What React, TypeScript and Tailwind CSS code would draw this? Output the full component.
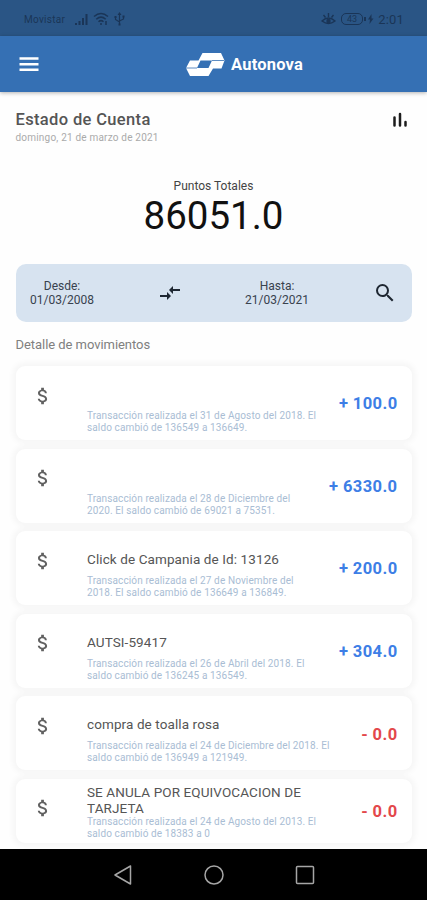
/**
 * Estado de Cuenta - account statement screen
 * Shows total points, date range filter and the list of movements
 */

import clsx from 'clsx';
import { MdAttachMoney, MdCompareArrows, MdSearch } from 'react-icons/md';

const movements = [
  {
    title: '',
    lines: ['Transacción realizada el 31 de Agosto del 2018. El', 'saldo cambió de 136549 a 136649.'],
    amount: '+ 100.0',
  },
  {
    title: '',
    lines: ['Transacción realizada el 28 de Diciembre del', '2020. El saldo cambió de 69021 a 75351.'],
    amount: '+ 6330.0',
  },
  {
    title: 'Click de Campania de Id: 13126',
    lines: ['Transacción realizada el 27 de Noviembre del', '2018. El saldo cambió de 136649 a 136849.'],
    amount: '+ 200.0',
  },
  {
    title: 'AUTSI-59417',
    lines: ['Transacción realizada el 26 de Abril del 2018. El', 'saldo cambió de 136245 a 136549.'],
    amount: '+ 304.0',
  },
  {
    title: 'compra de toalla rosa',
    lines: ['Transacción realizada el 24 de Diciembre del 2018. El', 'saldo cambió de 136949 a 121949.'],
    amount: '- 0.0',
  },
  {
    title: 'SE ANULA POR EQUIVOCACION DE TARJETA',
    lines: ['Transacción realizada el 24 de Agosto del 2013. El', 'saldo cambió de 18383 a 0'],
    amount: '- 0.0',
    compact: true,
  },
];

function StatusBar() {
  return (
    <div className="flex h-9 shrink-0 items-center bg-[#2a5585] pl-6 pr-[23px] pt-0.5 text-[#1a3557]">
      <span className="w-[51px] text-[10px] tracking-[0.3px]">Movistar</span>
      {/* Signal */}
      <svg className="h-[12px] w-[13px]" viewBox="0 0 13 12" fill="currentColor">
        <path d="M0 10h2v2H0zM3.5 8h2v4h-2zM7 5h2v7H7zM10.5 1h2v11h-2z" />
      </svg>
      {/* Wifi */}
      <svg className="ml-[5px] h-[14px] w-4" viewBox="0 0 16 14" fill="none" stroke="currentColor" strokeWidth="1.5">
        <path d="M1 4.5Q8-1.5 15 4.5M3.3 7.3Q8 3 12.7 7.3M5.5 9.8Q8 7.5 10.5 9.8" />
        <circle cx="8" cy="12" r="1" fill="currentColor" stroke="none" />
        <path d="M13 9v4" />
      </svg>
      {/* USB */}
      <svg className="ml-[5px] h-[14px] w-[11px]" viewBox="0 0 11 14" fill="none" stroke="currentColor" strokeWidth="1.2">
        <path d="M5.5 2v10M1.5 5v2.5l4 2.5M9.5 4.5V7L5.5 9" />
        <path d="M5.5 0l2 3h-4zM.5 4h2v2h-2zM8.5 3.5h2v2h-2zM4.5 11.5h2v2h-2z" fill="currentColor" stroke="none" />
      </svg>
      {/* Eye comfort */}
      <svg className="ml-auto h-[13px] w-[15px]" viewBox="0 0 15 13" fill="none" stroke="currentColor" strokeWidth="1.4">
        <path d="M1 8Q7.5 2 14 8Q7.5 13 1 8ZM7.5 0v4M2.5 2l2 2.5M12.5 2l-2 2.5" />
        <circle cx="7.5" cy="8" r="2.2" fill="currentColor" stroke="none" />
      </svg>
      <span className="ml-[5px] flex h-3 w-[22px] items-center justify-center rounded-[5px] border border-current text-[9px] leading-none">
        43
      </span>
      <svg className="ml-px h-[10px] w-[10px]" viewBox="0 0 10 10" fill="currentColor">
        <path d="M0 3h2v4H0zM7.5 0L4 5.5h2L5.5 10 9.5 4.5h-2z" />
      </svg>
      <span className="ml-1 text-[13px] leading-none tracking-[0.2px]">2:01</span>
    </div>
  );
}

function Logo() {
  return (
    <svg className="h-6 w-10" viewBox="0 0 40 24">
      <path
        fill="#fff"
        fillRule="evenodd"
        d="M17.5 0H36L39.5 7.5 36.5 15.5H28L23.5 23H5L1 15 5 7.5H13.5ZM15.5 7.5L12 15H23.5L27 7.5Z"
      />
      <path d="M1 15H12M27 7.5H39" stroke="#3570b4" strokeWidth=".8" />
    </svg>
  );
}

function AppBar() {
  return (
    <header className="z-10 flex h-14 shrink-0 items-center bg-[#3570b4] pl-[17px] text-white shadow-[0_1px_4px_rgba(0,0,0,0.3)]">
      <svg className="h-6 w-6" viewBox="0 0 24 24" stroke="currentColor" strokeWidth="2.6">
        <path d="M2.5 6.5h19M2.5 12.2h19M2.5 17.8h19" />
      </svg>
      <div className="ml-[144px] flex items-center gap-[6px] pt-0.5">
        <Logo />
        <span className="text-[16.5px] font-bold tracking-[0.2px]">Autonova</span>
      </div>
    </header>
  );
}

function DateField({ label, value }: { label: string; value: string }) {
  return (
    <div className="w-[93px] text-center text-[12px] leading-[14px] text-[#38424e]">
      <p>{label}</p>
      <p>{value}</p>
    </div>
  );
}

function MovementCard({ title, lines, amount, compact }: (typeof movements)[number]) {
  return (
    <li
      className={clsx(
        'flex shrink-0 rounded-[9px] bg-white pl-[16px] pr-[14px] shadow-[0_0_6px_3px_rgba(0,0,0,0.04)]',
        compact ? 'h-[64px]' : 'h-[74px]',
      )}
    >
      <MdAttachMoney
        className={clsx('h-[22px] w-[22px] shrink-0 text-[#616161]', compact ? 'mt-[18px]' : 'mt-[18.5px]')}
      />
      <div className={clsx('ml-[33.5px] flex-1 whitespace-nowrap', compact ? 'pt-[5px]' : 'pt-[20px]')}>
        <h3
          className={clsx(
            'text-[13.5px] tracking-[0.1px] text-[#555]',
            compact ? 'w-[230px] whitespace-normal leading-4' : 'h-6 leading-4',
          )}
        >
          {title}
        </h3>
        <p className="text-[10px] leading-3 tracking-[0.12px] text-[#a9bdd4]">
          {lines[0]}
          <br />
          {lines[1]}
        </p>
      </div>
      <span
        className={clsx(
          'self-center pt-[3px] text-[16.5px] font-bold tracking-[0.4px]',
          amount.startsWith('+') ? 'text-[#3d7ee6]' : 'text-[#e3474b]',
        )}
      >
        {amount}
      </span>
    </li>
  );
}

function NavBar() {
  return (
    <nav className="z-10 flex h-[51px] shrink-0 items-center justify-center gap-[71px] bg-black">
      <svg className="h-5 w-5" viewBox="0 0 20 20" fill="none" stroke="#a6a6a6" strokeWidth="1.5" strokeLinejoin="round">
        <path d="M17.5 1v18L2 10z" />
      </svg>
      <svg className="h-5 w-5" viewBox="0 0 20 20" fill="none" stroke="#a6a6a6" strokeWidth="1.5">
        <circle cx="10" cy="10" r="9" />
      </svg>
      <svg className="h-5 w-5" viewBox="0 0 20 20" fill="none" stroke="#a6a6a6" strokeWidth="1.5">
        <rect x="1.5" y="1.5" width="17" height="17" rx="1" />
      </svg>
    </nav>
  );
}

export default function App() {
  return (
    <div className="flex h-[900px] w-[427px] flex-col overflow-hidden bg-[#fefefe] font-['Roboto',sans-serif]">
      <StatusBar />
      <AppBar />

      <main className="flex min-h-0 flex-1 flex-col overflow-hidden px-[15.5px]">
        {/* Title */}
        <div className="flex h-[61px] shrink-0 items-start justify-between pt-[18px]">
          <div>
            <h1 className="text-[16.5px] font-medium leading-5 tracking-[0.35px] text-[#555]">Estado de Cuenta</h1>
            <p className="text-[10px] leading-[15px] tracking-[0.2px] text-[#aaa]">domingo, 21 de marzo de 2021</p>
          </div>
          <svg className="mr-1 mt-0.5 h-4 w-4" viewBox="0 0 16 16" stroke="#1c1c1c" strokeWidth="2.5" strokeLinecap="round">
            <path d="M2.5 5.5v8M8 2v11.5M13.5 10v3.5" />
          </svg>
        </div>

        {/* Total points */}
        <section className="flex h-[111px] shrink-0 flex-col items-center pt-[24px]">
          <p className="text-[12px] leading-[18px] text-[#444]">Puntos Totales</p>
          <p className="text-[38.5px] leading-[42px] text-[#111]">86051.0</p>
        </section>

        {/* Date range */}
        <section className="flex h-[58px] shrink-0 items-center rounded-[10px] bg-[#d7e3f0]">
          <DateField label="Desde:" value="01/03/2008" />
          <MdCompareArrows className="ml-[49.5px] h-6 w-6 text-[#1e2732]" />
          <div className="ml-[48.5px]">
            <DateField label="Hasta:" value="21/03/2021" />
          </div>
          <MdSearch className="ml-[49px] h-6 w-6 text-[#1e2732]" />
        </section>

        {/* Movements */}
        <h2 className="mt-[14px] shrink-0 text-[13px] leading-[18px] tracking-[-0.05px] text-[#808080]">
          Detalle de movimientos
        </h2>
        <ul className="mt-[12px] flex flex-col gap-[8.6px]">
          {movements.map((movement) => (
            <MovementCard key={movement.lines[0]} {...movement} />
          ))}
        </ul>
      </main>

      <NavBar />
    </div>
  );
}
